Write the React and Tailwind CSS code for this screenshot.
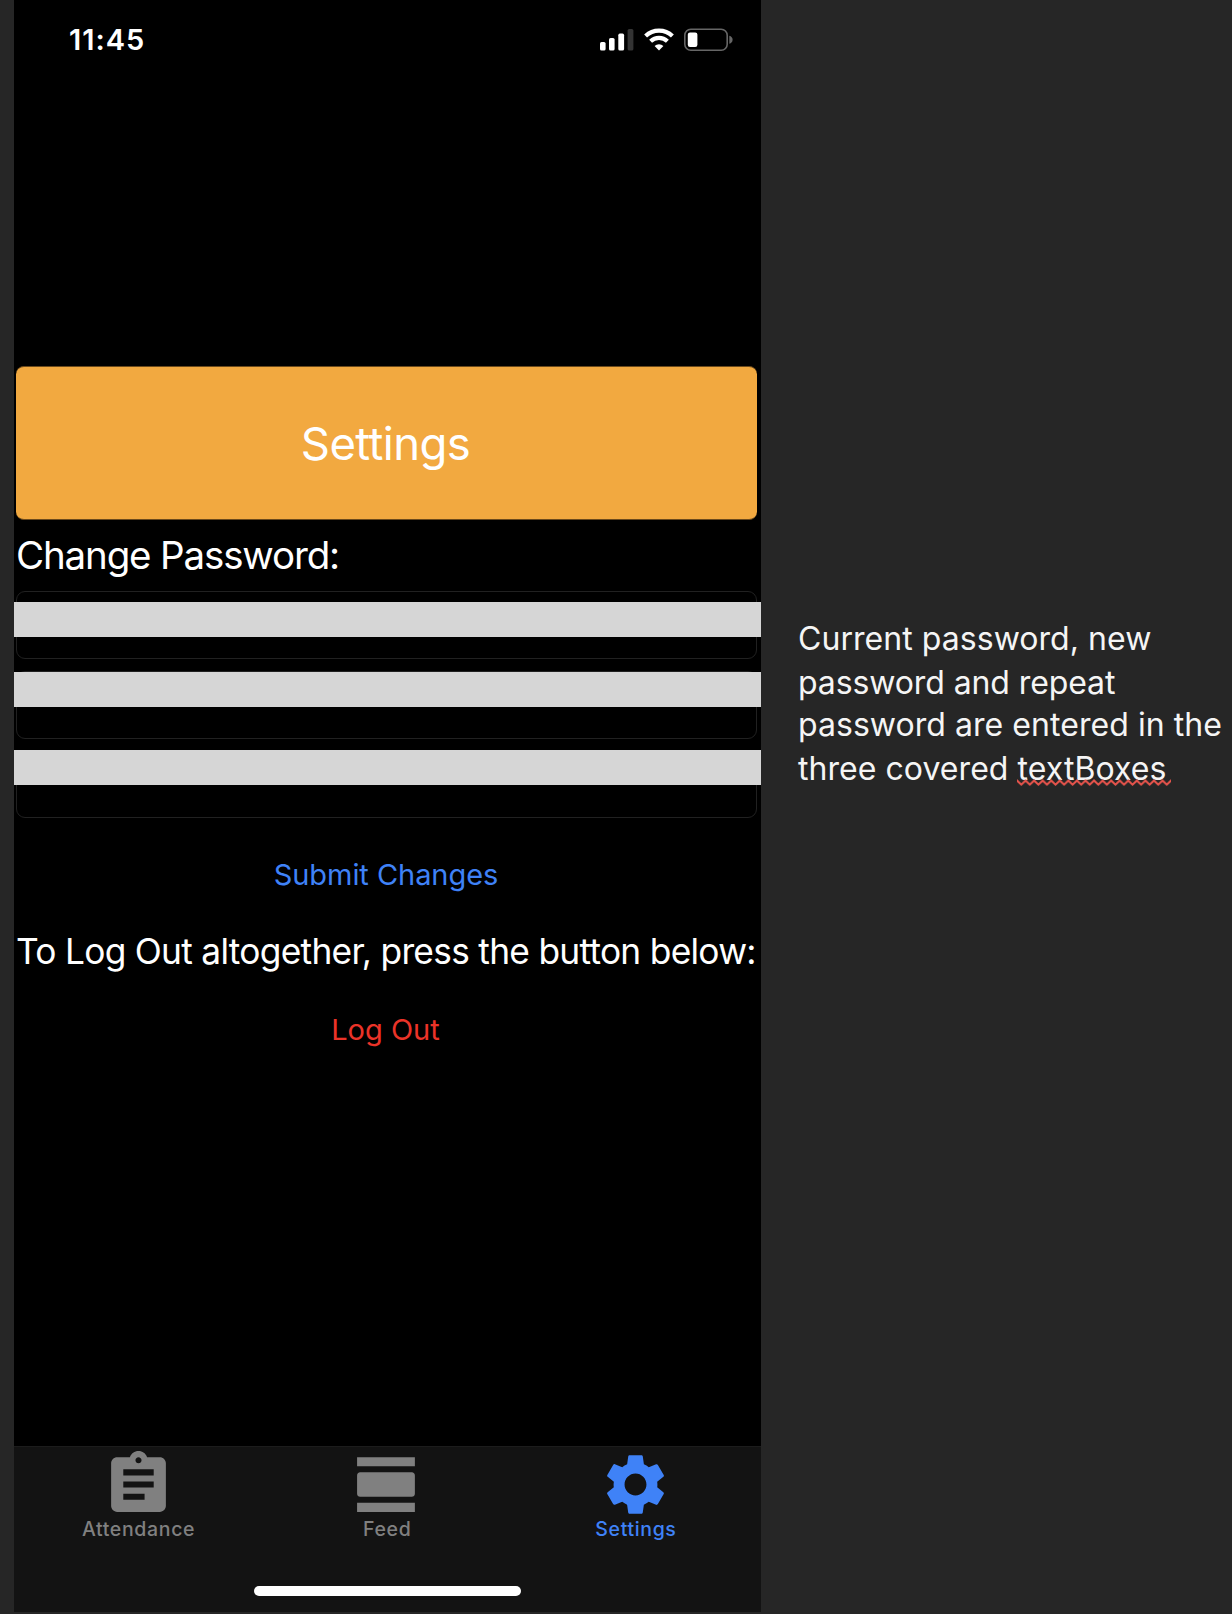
const Signal = () => (
  <svg width="34" height="24" viewBox="0 0 34 24" fill="#fff">
    <rect x="0" y="14" width="5.6" height="8.5" rx="1.6" />
    <rect x="9" y="10" width="5.6" height="12.5" rx="1.6" />
    <rect x="18.3" y="5.6" width="5.8" height="16.9" rx="1.6" />
    <rect x="27.6" y="1" width="5.8" height="21.5" rx="1.6" fill="#333" />
  </svg>
);

const Wifi = () => (
  <svg width="30" height="24" viewBox="0 0 30 24" fill="none" stroke="#fff" strokeWidth="4.2">
    <path d="M1.6 9.2a19.4 19.4 0 0 1 26.8 0" transform="translate(0 -1.2)" />
    <path d="M6.6 14.2a12.2 12.2 0 0 1 16.8 0" transform="translate(0 -0.9)" />
    <path d="M15 22.4l-4.4-4.4a6.4 6.4 0 0 1 8.8 0z" fill="#fff" stroke="none" />
  </svg>
);

const Battery = () => (
  <svg width="50" height="24" viewBox="0 0 50 24">
    <rect x="0.8" y="1.3" width="42.4" height="21" rx="6" fill="none" stroke="#666" strokeWidth="1.6" />
    <rect x="3.8" y="4.6" width="9.6" height="14.4" rx="2.2" fill="#fff" />
    <path d="M45.3 7.8c2 .6 3.3 2 3.3 4s-1.3 3.4-3.3 4z" fill="#666" />
  </svg>
);

const ICONS = {
  Attendance:
    "M19 3h-4.180C14.400 1.840 13.300 1 12 1c-1.300 0-2.400.840-2.820 2H5c-1.100 0-2 .900-2 2v14c0 1.100.900 2 2 2h14c1.100 0 2-.900 2-2V5c0-1.100-.900-2-2-2zm-7 0c.550 0 1 .450 1 1s-.450 1-1 1-1-.450-1-1 .450-1 1-1zm2 14H7v-2h7v2zm3-4H7v-2h10v2zm0-4H7V7h10v2z",
  Feed: "M2 21h19v-3H2v3zM20 8H3c-.550 0-1 .450-1 1v6c0 .550.450 1 1 1h17c.550 0 1-.450 1-1V9c0-.550-.450-1-1-1zM2 3v3h19V3H2z",
  Settings:
    "M19.140 12.940c.040-.300.060-.610.060-.940 0-.320-.020-.640-.070-.940l2.030-1.580c.180-.140.230-.410.120-.610l-1.920-3.320c-.120-.220-.370-.290-.590-.220l-2.390.960c-.500-.380-1.030-.700-1.620-.940l-.360-2.540c-.040-.240-.240-.410-.480-.410h-3.840c-.240 0-.430.170-.470.410l-.360 2.540c-.590.240-1.130.570-1.620.940l-2.390-.960c-.220-.080-.470 0-.590.220L2.740 8.870c-.120.210-.080.470.120.610l2.030 1.580c-.050.300-.090.630-.090.940s.020.640.070.940l-2.030 1.580c-.180.140-.230.410-.120.610l1.920 3.320c.120.220.370.290.590.220l2.390-.960c.500.380 1.030.700 1.620.940l.360 2.540c.050.240.240.410.480.410h3.840c.240 0 .440-.170.470-.410l.360-2.540c.590-.240 1.130-.560 1.620-.940l2.390.960c.220.080.470 0 .590-.220l1.920-3.320c.120-.220.070-.470-.120-.610l-2.010-1.580zM12 15.600c-1.980 0-3.600-1.620-3.600-3.600s1.620-3.600 3.600-3.600 3.600 1.620 3.600 3.600-1.620 3.600-3.600 3.600z",
};

const Tab = ({ name, color }) => (
  <button className={`flex flex-1 flex-col items-center ${color}`}>
    <svg className="mt-px size-[73px]" viewBox="0 0 24 24" fill="currentColor">
      <path d={ICONS[name]} />
    </svg>
    <span className="-mt-[4px] h-6 pl-[0.5px] text-[19.5px] leading-[25px] font-medium tracking-[0.65px]">{name}</span>
  </button>
);

const Field = ({ className, cover }) => (
  <div className={`relative mr-1 ml-[2px] rounded-[9px] border border-[#212121] ${className}`}>
    <div className={`absolute -right-[5px] -left-[3px] h-[35px] bg-[#d6d6d6] ${cover}`} />
  </div>
);

const Squiggle = () => (
  <svg className="absolute top-[30px] -left-[1px]" width="156" height="8" viewBox="0 0 156 8">
    <defs>
      <pattern id="wave" width="8.56" height="8" patternUnits="userSpaceOnUse">
        <path d="M-1 .5L0 1.5 4.28 5.6 8.56 1.5l1-1" fill="none" stroke="#e5534b" strokeWidth="2" />
      </pattern>
    </defs>
    <rect width="154" height="8" fill="url(#wave)" />
  </svg>
);

export default function App() {
  return (
    <div className="flex h-[1614px] w-[1232px] overflow-hidden bg-[#262626] pl-[14px] font-['Inter',sans-serif] whitespace-nowrap text-white">
      <main className="flex h-[1612px] w-[747px] flex-col bg-black">
        <header className="flex h-20 items-center justify-between pr-[27px] pl-[55px]">
          <span className="text-[29px] font-semibold tracking-[1px]">11:45</span>
          <div className="flex items-center gap-[10px]">
            <Signal />
            <Wifi />
            <Battery />
          </div>
        </header>

        <h1 className="mt-[286px] mr-1 ml-[2px] flex h-[154px] items-center justify-center rounded-[8px] border-y border-[#6b4a1c] bg-[#f2a940] pt-[3px] pr-[2px] text-[45.5px] tracking-[-0.6px]">
          Settings
        </h1>
        <h2 className="h-[71px] pl-[2px] text-[38.5px] leading-[70px] tracking-[-1.15px]">Change Password:</h2>

        <Field className="h-[68px]" cover="top-[10px]" />
        <Field className="mt-3 h-[68px]" cover="top-0" />
        <Field className="mt-[11px] h-[68px]" cover="-top-px" />

        <button className="mt-px h-[110px] pt-px pr-[3px] text-[29px] tracking-[-0.05px] text-[#3f82f7]">
          Submit Changes
        </button>
        <p className="h-11 pl-[2px] text-[35.3px] leading-[46px] tracking-[-0.71px]">
          To Log Out altogether, press the button below:
        </p>
        <button className="h-28 pt-px pr-1 text-[29px] text-[#eb3328]">Log Out</button>

        <nav className="mt-auto flex h-[166px] flex-col border-t border-[#1c1c1c] bg-[#131313]">
          <div className="mr-px flex h-[138px]">
            <Tab name="Attendance" color="text-[#808080]" />
            <Tab name="Feed" color="text-[#808080]" />
            <Tab name="Settings" color="text-[#3f82f7]" />
          </div>
          <div className="mt-[1px] ml-[240px] h-[10px] w-[267px] rounded-full bg-white" />
        </nav>
      </main>

      <aside className="mt-[617px] ml-[37px] flex flex-col text-[32px] tracking-[0.05px] text-[#f5f5f5]">
        <span className="h-[44px] leading-[43px]">Current password, new</span>
        <span className="h-[42px] leading-[43px] tracking-[-0.1px]">password and repeat</span>
        <span className="h-[44px] leading-[43px]">password are entered in the</span>
        <span className="h-[43px] leading-[43px]">
          three covered{" "}
          <span className="relative">
            textBoxes
            <Squiggle />
          </span>
        </span>
      </aside>
    </div>
  );
}
